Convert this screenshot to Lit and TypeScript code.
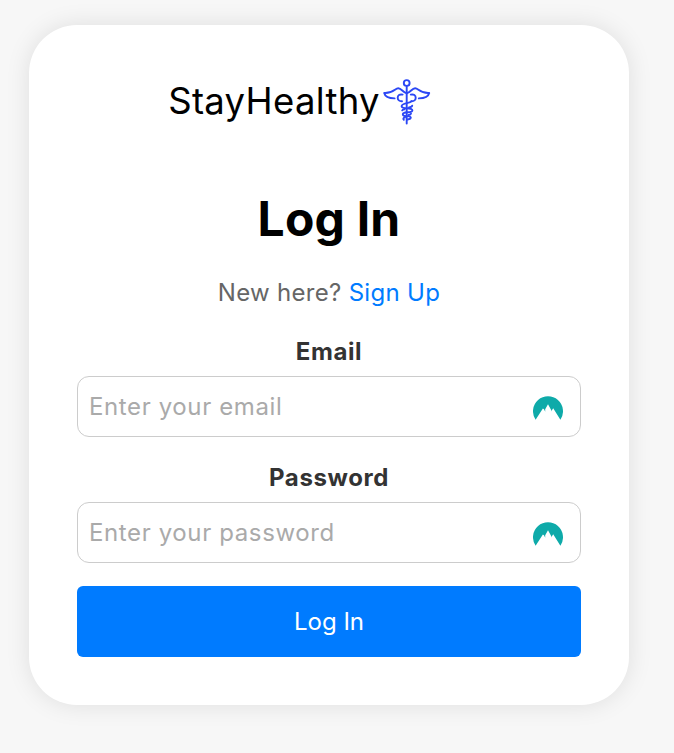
import { LitElement, html, css, svg } from "lit";
import { customElement, property } from "lit/decorators.js";

@customElement("caduceus-icon")
class CaduceusIcon extends LitElement {
  static styles = css`
    :host { display: block; width: 48px; height: 46px; margin-top: 4px; }
    svg { display: block; }
    .line { fill: none; stroke: #2b47f5; stroke-width: 1.9; stroke-linecap: round; stroke-linejoin: round; }
  `;
  render() {
    const wing = svg`
      <path class="line" d="M23.7 14.2C20 13.8 18.5 9.2 15.3 9.2C12 9.2 10.5 14.6 1.2 14C2 17.5 5 19.4 11.6 19.4" />
      <path class="line" d="M19.6 15.6C16.5 15 14.7 16.4 14.7 18.7C14.7 21 16.4 22.4 19 22.2" />`;
    return html`<svg width="48" height="46" viewBox="0 0 48 46">
      <circle class="line" cx="23.7" cy="4" r="2.9" />
      <path class="line" d="M23.7 7V44.5" />
      ${wing}
      <g transform="translate(47.4 0) scale(-1 1)">${wing}</g>
      <path class="line" d="M28.4 22.2C27 24.6 18.6 23.6 18.6 27.2C18.6 30.6 29.4 27.8 29.4 31.4C29.4 34.6 19.8 32 19.8 35.4C19.8 38.4 27.8 36 27.8 38.6C27.8 40.4 25 40.4 24 40.6" />
      <path class="line" d="M29.2 26.6C29 28 27.5 28.2 26 28.4M19.2 31.4C19.4 30.6 20.4 30.4 21.6 30.2M28 34.6C27.8 35.6 26.8 35.8 25.6 36M20.8 40.8C19.8 40 20.4 38.8 22 38.4" />
    </svg>`;
  }
}

@customElement("login-field")
class LoginField extends LitElement {
  @property() label = "";
  @property() type = "text";
  @property() placeholder = "";
  static styles = css`
    :host { display: block; }
    label { display: block; height: 36px; line-height: 36px; margin-bottom: 6px; text-align: center; font-weight: 700; font-size: 24px; letter-spacing: 0.6px; color: #333; }
    .box { display: flex; align-items: center; box-sizing: border-box; height: 61px; padding: 0 17px 0 11px; border: 1px solid #ccc; border-radius: 12px; background: #fff; }
    input { flex: 1; min-width: 0; padding: 0; border: 0; outline: 0; background: none; font: inherit; font-size: 24px; height: 40px; letter-spacing: 0.62px; }
    input::placeholder { color: #aaa; opacity: 1; }
    svg { display: block; margin-top: 3px; }
  `;
  render() {
    return html`<label for="field">${this.label}</label>
      <div class="box">
        <input id="field" type=${this.type} placeholder=${this.placeholder} />
        <svg width="30" height="25" viewBox="0 0 30 25">
          <path fill="#0eaaa9" d="M2.6 23.8A15 15 0 1 1 27.4 23.8L20.2 12.2L18.9 14.2L19 15.4L15 8.2L12.2 13.2L12.2 15.8L11 13.2L9.9 12.4Z" />
        </svg>
      </div>`;
  }
}

@customElement("app-root")
class AppRoot extends LitElement {
  static styles = css`
    :host { display: block; box-sizing: border-box; height: 753px; padding: 25px 45px 0 29px; overflow: hidden; background: #f7f7f7; font-family: Inter, "Liberation Sans", sans-serif; }
    .card { box-sizing: border-box; height: 680px; padding: 48px; border-radius: 48px; background: #fff; box-shadow: 0 0 24px rgba(0, 0, 0, 0.1); }
    .brand { display: flex; justify-content: center; align-items: center; height: 54px; padding-right: 59px; gap: 3px; }
    .name { font-size: 36.5px; line-height: 54px; letter-spacing: 0.3px; white-space: nowrap; padding-top: 1px; }
    h1 { margin: 56px 0 0; font-size: 48px; line-height: 72px; font-weight: 700; letter-spacing: 0.2px; text-align: center; }
    .hint { margin: 20px 0 23px; font-size: 24px; line-height: 36px; letter-spacing: 0.3px; text-align: center; color: #666; }
    a { color: #007bff; text-decoration: none; }
    login-field { margin-bottom: 23px; }
    button { display: block; width: 100%; height: 71px; padding: 0; border: 0; border-radius: 6px; background: #007bff; color: #fff; font: inherit; font-size: 24px; }
  `;
  render() {
    return html`<main class="card">
      <div class="brand"><span class="name">StayHealthy</span><caduceus-icon></caduceus-icon></div>
      <h1>Log In</h1>
      <p class="hint">New here? <a href="#">Sign Up</a></p>
      <login-field label="Email" type="email" placeholder="Enter your email"></login-field>
      <login-field label="Password" type="password" placeholder="Enter your password"></login-field>
      <button type="button">Log In</button>
    </main>`;
  }
}
